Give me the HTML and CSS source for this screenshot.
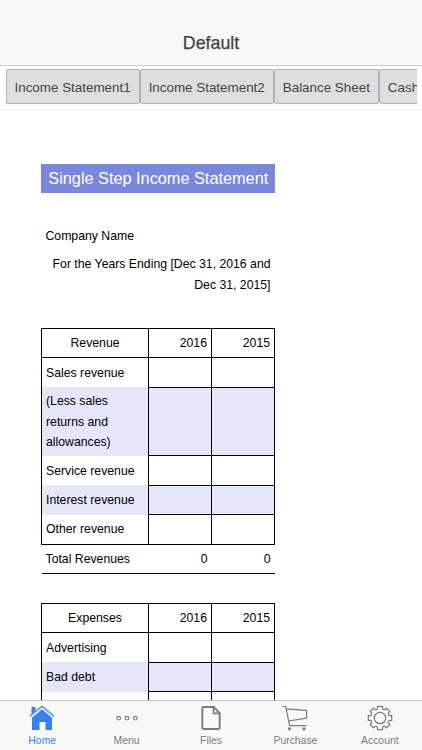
FILE: index.html
```html
<!DOCTYPE html>
<html lang="en">
<head>
    <meta charset="UTF-8">
    <title>Default</title>
    <link rel="stylesheet" href="styles.css">
</head>
<body>
    <header class="header">Default</header>

    <div class="sheet-bar">
        <div class="sheets">
            <button>Income Statement1</button>
            <button>Income Statement2</button>
            <button>Balance Sheet</button>
            <button>Cash Flow</button>
        </div>
    </div>

    <main class="content">
        <table class="sheet">
            <colgroup><col class="name"><col class="year"><col class="year"></colgroup>
            <tr class="intro"><td class="title" colspan="3">Single Step Income Statement</td></tr>
            <tr class="intro"><td colspan="3"></td></tr>
            <tr class="intro"><td colspan="3">Company Name</td></tr>
            <tr class="period"><td colspan="3">For the Years Ending [Dec 31, 2016 and Dec 31, 2015]</td></tr>
            <tr><td colspan="3"></td></tr>

            <tr class="head"><th>Revenue</th><th>2016</th><th>2015</th></tr>
            <tr class="item"><td>Sales revenue</td><td></td><td></td></tr>
            <tr class="item shaded"><td>(Less sales returns and allowances)</td><td></td><td></td></tr>
            <tr class="item"><td>Service revenue</td><td></td><td></td></tr>
            <tr class="item shaded"><td>Interest revenue</td><td></td><td></td></tr>
            <tr class="item"><td>Other revenue</td><td></td><td></td></tr>
            <tr class="total"><td>Total Revenues</td><td>0</td><td>0</td></tr>
            <tr><td colspan="3"></td></tr>

            <tr class="head"><th>Expenses</th><th>2016</th><th>2015</th></tr>
            <tr class="item"><td>Advertising</td><td></td><td></td></tr>
            <tr class="item shaded"><td>Bad debt</td><td></td><td></td></tr>
            <tr class="item"><td></td><td></td><td></td></tr>
        </table>
    </main>

    <nav class="tabs">
        <a class="tab active">
            <svg width="26" height="26" viewBox="0 0 26 26">
                <path fill="currentColor" d="M2.500 2h4v4L2.500 9.300zM13 4.200l10 8.500V25h-6.500v-8h-6v8H3V12.700z"/>
                <path fill="none" stroke="currentColor" stroke-width="1.200" d="M1 11.300L13 1.400l12 9.900"/>
            </svg>
            <span>Home</span>
        </a>
        <a class="tab">
            <svg width="26" height="26" viewBox="0 0 26 26" fill="none" stroke="currentColor" stroke-width="1.200">
                <circle cx="4.700" cy="13.200" r="1.800"/>
                <circle cx="13" cy="13.200" r="1.800"/>
                <circle cx="21.300" cy="13.200" r="1.800"/>
            </svg>
            <span>Menu</span>
        </a>
        <a class="tab">
            <svg width="26" height="26" viewBox="0 0 26 26" fill="none" stroke="currentColor" stroke-width="1.900" stroke-linejoin="round">
                <path d="M5.500 2h10.200l6 6.200v14.600q0 1.200-1.200 1.200h-15q-1.200 0-1.200-1.200V3.200Q4.300 2 5.500 2z"/>
                <path d="M15.500 2v6.400h6.200" stroke-width="1.700"/>
            </svg>
            <span>Files</span>
        </a>
        <a class="tab">
            <svg width="26" height="26" viewBox="0 0 26 26" fill="none" stroke="currentColor" stroke-width="1.200" stroke-linejoin="round">
                <path d="M.5 1.500h3.200L7.600 20.700h17M4.200 3.800l20.400 1.500v7.800L6.500 16"/>
                <circle cx="7.500" cy="23.800" r="1" fill="currentColor"/>
                <circle cx="22" cy="23.800" r="1" fill="currentColor"/>
            </svg>
            <span>Purchase</span>
        </a>
        <a class="tab">
            <svg width="26" height="26" viewBox="0 0 26 26" fill="none" stroke="currentColor" stroke-width="1.200" stroke-linejoin="round">
                <path d="M10.500 1.300h5Q15.500 5 17.400 4.600Q18.800 4.300 19.500 3.100L22.900 6.500Q20.300 9 21.700 10.200Q22.500 10.700 24.700 10.600V15.400Q21 15.300 21.200 17.400Q21.500 18.700 22.900 19.500L19.500 22.900Q17 20.300 15.900 21.700Q15.400 22.500 15.500 24.700H10.500Q10.600 21 8.600 21.400Q7.200 21.700 6.500 22.900L3.100 19.500Q5.700 17 4.300 15.800Q3.500 15.300 1.300 15.400V10.600Q5 10.700 4.600 8.600Q4.300 7.200 3.100 6.500L6.500 3.100Q9 5.700 10.100 4.300Q10.600 3.500 10.500 1.300z"/>
                <circle cx="13" cy="13" r="5.700"/>
            </svg>
            <span>Account</span>
        </a>
    </nav>
</body>
</html>
```
FILE: styles.css
```css
body {
    margin: 0;
    height: 100vh;
    display: flex;
    flex-direction: column;
    overflow: hidden;
    background: #fff;
    font-family: "Liberation Sans", Arial, sans-serif;
}

.header {
    flex: none;
    box-sizing: border-box;
    height: 66px;
    padding-top: 22px;
    border-bottom: 1px solid #d0d0d0;
    background: #f8f8f8;
    color: #424242;
    font-size: 17.8px;
    line-height: 43px;
    text-align: center;
    -webkit-text-stroke: 0.25px #424242;
}

.sheet-bar {
    flex: none;
    box-sizing: border-box;
    height: 44px;
    padding: 3px 5px 3px 5.5px;
    border-bottom: 1px solid #eee;
}
.sheets {
    display: flex;
    overflow: hidden;
}
.sheets button {
    flex: none;
    box-sizing: border-box;
    height: 35px;
    padding: 1px 8px 0;
    border: 1px solid #b2b2b2;
    border-radius: 2px;
    background: #dedede;
    color: #444;
    font-family: inherit;
    font-size: 13.4px;
}

.content {
    flex: 1;
    min-height: 0;
    overflow: hidden;
    padding: 54px 0 0 41px;
}

.sheet {
    width: 234px;
    table-layout: fixed;
    border-collapse: collapse;
    color: #000;
    font-size: 12.25px;
    line-height: 20.2px;
}
.sheet col.name { width: 107px; }
.sheet col.year { width: 63px; }
.sheet tr { height: 29.5px; }
.sheet .intro { height: 28.8px; }
.sheet td, .sheet th {
    padding: 4px;
    font-weight: normal;
}
.sheet .title {
    padding: 0;
    border-left: 1px solid #7a88db;
    background: #7a88db;
    color: #fff;
    font-size: 16.3px;
    text-align: center;
}
.period td { text-align: right; }
.head th {
    border: 1px solid #000;
    text-align: right;
}
.head th:first-child { text-align: center; }
.item td { border: 1px solid #000; }
.item td:first-child {
    border-top: none;
    border-bottom: none;
}
.shaded td { background: #e5e6fa; }
.total td {
    border-top: 1px solid #000;
    border-bottom: 1px solid #000;
    text-align: right;
}
.total td:first-child { text-align: left; }

.tabs {
    flex: none;
    box-sizing: border-box;
    height: 50px;
    display: flex;
    border-top: 1px solid #c4c4c8;
    background: #f8f8f8;
}
.tab {
    flex: 1;
    display: flex;
    flex-direction: column;
    align-items: center;
    padding-top: 4px;
    color: #7b7b7b;
    font-size: 10.4px;
    line-height: 20px;
}
.tab svg { flex: none; }
.tab.active { color: #3880f0; }
```
